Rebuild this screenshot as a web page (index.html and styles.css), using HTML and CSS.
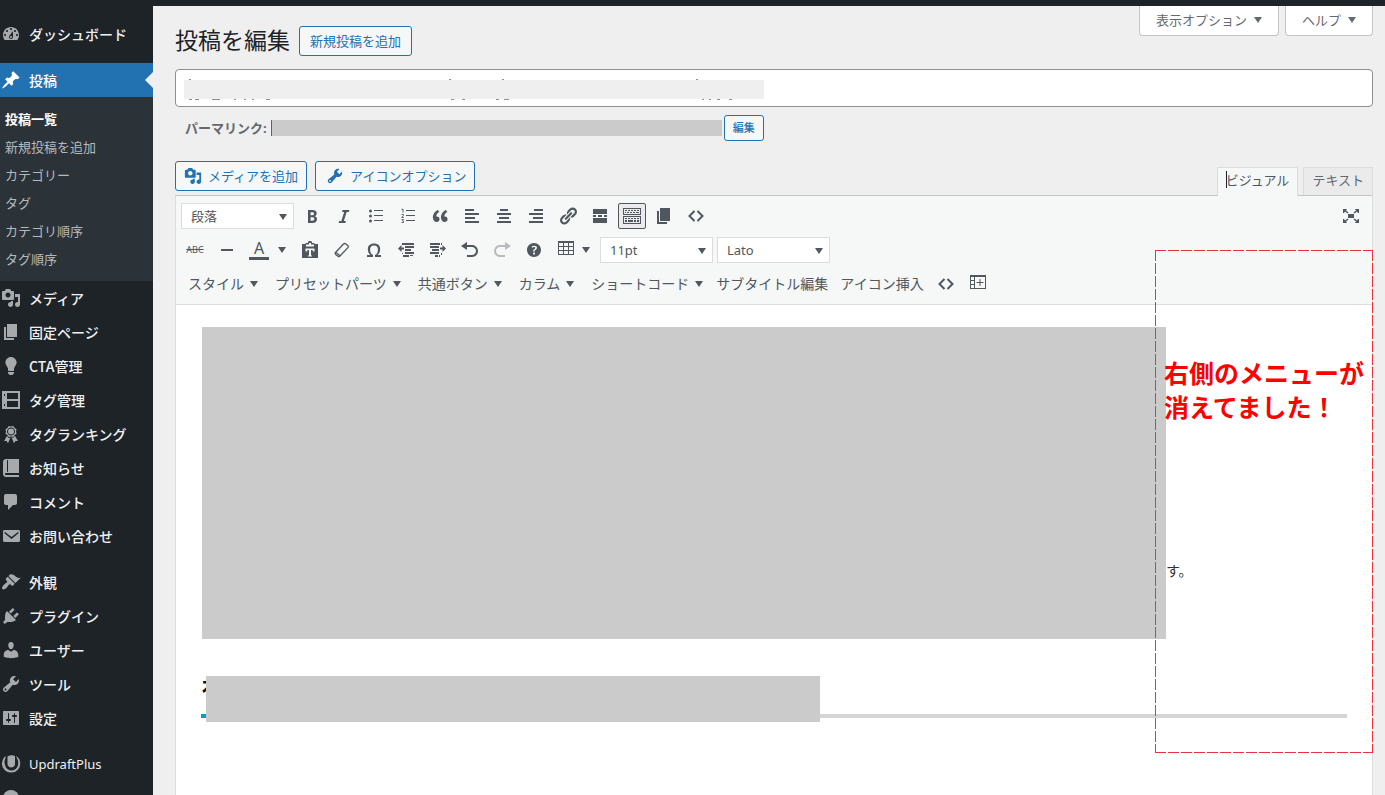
FILE: index.html
```html
<!DOCTYPE html>
<html lang="ja">
<head>
<meta charset="utf-8">
<meta name="viewport" content="width=device-width, initial-scale=1">
<title>投稿を編集</title>
<link rel="stylesheet" href="styles.css">
</head>
<body>
<svg class="sprite" aria-hidden="true">
  <symbol id="dashboard" viewBox="0 0 20 20"><path d="M3.76 16h12.48c1.1-1.37 1.76-3.11 1.76-5 0-4.42-3.58-8-8-8s-8 3.58-8 8c0 1.89.66 3.63 1.76 5zM10 4c.55 0 1 .45 1 1s-.45 1-1 1-1-.45-1-1 .45-1 1-1zM6 6c.55 0 1 .45 1 1s-.45 1-1 1-1-.45-1-1 .45-1 1-1zm8 0c.55 0 1 .45 1 1s-.45 1-1 1-1-.45-1-1 .45-1 1-1zm-5.37 5.55L12 7v6c0 1.1-.9 2-2 2s-2-.9-2-2c0-.57.24-1.08.63-1.45zM4 10c.55 0 1 .45 1 1s-.45 1-1 1-1-.45-1-1 .45-1 1-1zm12 0c.55 0 1 .45 1 1s-.45 1-1 1-1-.45-1-1 .45-1 1-1zm-5 3c0-.55-.45-1-1-1s-1 .45-1 1 .45 1 1 1 1-.45 1-1z"/></symbol>
  <symbol id="pin" viewBox="0 0 20 20"><path d="M10.44 3.02l1.82-1.82 6.36 6.35-1.83 1.82c-1.05-.68-2.48-.57-3.41.36l-.75.75c-.92.93-1.04 2.35-.35 3.41l-1.83 1.82-2.41-2.41-2.8 2.79c-.42.42-3.38 2.71-3.8 2.29s1.86-3.39 2.28-3.81l2.79-2.79L4.1 9.36l1.83-1.82c1.05.69 2.48.57 3.4-.36l.75-.75c.93-.92 1.05-2.35.36-3.41z"/></symbol>
  <symbol id="media" viewBox="0 0 20 20"><path d="M13 11V4c0-.55-.45-1-1-1h-1.67L9 1H5L3.67 3H2c-.55 0-1 .45-1 1v7c0 .55.45 1 1 1h10c.55 0 1-.45 1-1zM7 4.5c1.38 0 2.5 1.12 2.5 2.5S8.38 9.5 7 9.5 4.5 8.38 4.5 7 5.62 4.5 7 4.5zM14 6h5v10.5c0 1.38-1.12 2.5-2.5 2.5S14 17.88 14 16.5s1.12-2.5 2.5-2.5c.17 0 .34.02.5.05V9h-3V6zm-4 8.05V13h2v3.5c0 1.38-1.12 2.5-2.5 2.5S7 17.88 7 16.5 8.12 14 9.5 14c.17 0 .34.02.5.05z"/></symbol>
  <symbol id="page" viewBox="0 0 20 20"><path d="M6 15V2h10v13H6zm-1 1h8v2H3V5h2v11z"/></symbol>
  <symbol id="bulb" viewBox="0 0 20 20"><path d="M10 1c3.11 0 5.63 2.52 5.63 5.62 0 1.84-2.03 4.58-2.03 4.58-.33.44-.6 1.25-.6 1.8v1c0 .55-.45 1-1 1H8c-.55 0-1-.45-1-1v-1c0-.55-.27-1.36-.6-1.8 0 0-2.02-2.74-2.02-4.58C4.38 3.52 6.89 1 10 1zM7 16.87V16h6v.87c0 .62-.13 1.13-.75 1.13H12c0 .62-.4 1-1.02 1h-2c-.61 0-.98-.38-.98-1h-.25c-.62 0-.75-.51-.75-1.13z"/></symbol>
  <symbol id="rows" viewBox="0 0 20 20"><path fill-rule="evenodd" d="M1 1h18v18H1zM6 3v6h11V3zM6 11v6h11v-6zM3 4h1v2H3zM3 14h1v2H3z"/></symbol>
  <symbol id="award" viewBox="0 0 20 20"><path d="M4.46 5.16L5 7.46l-.54 2.29 2.01 1.24L7.7 13l2.3-.54 2.3.54 1.23-2.01 2.01-1.24L15 7.46l.54-2.3-2-1.24-1.24-2.01-2.3.55-2.29-.54-1.25 2zm5.55 6.34c-2.21 0-4-1.79-4-4 0-2.2 1.79-4 4-4 2.2 0 4 1.8 4 4 0 2.21-1.8 4-4 4zM13.830 11.600l-1.280 2.240-2.080-.47L13 19.200l1.400-2.200h2.500zm-7.700.07l1.250 2.250 2.130-.51L7 19.200 5.600 17H3.100z"/><circle cx="10" cy="7.500" r="3"/></symbol>
  <symbol id="book" viewBox="0 0 20 20"><path d="M5 17h13v2H5c-1.660 0-3-1.340-3-3V4c0-1.660 1.340-3 3-3h13v14H5c-.55 0-1 .45-1 1s.45 1 1 1zm2-3.500v-11c0-.28-.22-.5-.5-.5s-.5.22-.5.5v11c0 .28.22.5.5.5s.5-.22.5-.5z"/></symbol>
  <symbol id="comment" viewBox="0 0 20 20"><path d="M5 2h9c1.100 0 2 .9 2 2v7c0 1.100-.9 2-2 2h-2l-5 5v-5H5c-1.100 0-2-.9-2-2V4c0-1.100.9-2 2-2z"/></symbol>
  <symbol id="mail" viewBox="0 0 20 20"><path fill-rule="evenodd" d="M3 4h15l1 1v10l-1 1H3l-1-1V5zM4 6l-.8 1 7.300 6 7.300-6-.8-1-6.500 5z"/></symbol>
  <symbol id="brush" viewBox="0 0 20 20"><path d="M14.480 11.060L7.410 3.990l1.500-1.500c.5-.56 2.300-.47 3.510.32 1.210.8 1.430 1.280 2.910 2.100 1.180.64 2.450 1.260 4.450.85zm-.71.71L6.700 4.700 4.930 6.470c-.39.39-.39 1.020 0 1.410l1.060 1.060c.39.39.39 1.030 0 1.420-.6.6-1.430 1.110-2.210 1.690-.35.26-.7.53-1.010.84C1.430 14.230.4 16.080 1.400 17.070c.99 1 2.840-.03 4.180-1.360.31-.31.58-.66.85-1.020.57-.78 1.080-1.610 1.690-2.210.39-.39 1.020-.39 1.410 0l1.060 1.060c.39.39 1.020.39 1.410 0z"/></symbol>
  <symbol id="plug" viewBox="0 0 20 20"><path d="M13.110 4.360L9.870 7.600 8 5.730l3.240-3.240c.35-.34 1.050-.2 1.560.32.52.51.66 1.210.31 1.550zm-8 1.770l.91-1.120 9.010 9.010-1.190.84c-.71.71-2.630 1.160-3.820 1.160H6.140L4.900 17.260c-.59.59-1.540.59-2.120 0-.59-.58-.59-1.530 0-2.120l1.240-1.240v-3.880c0-1.130.4-3.190 1.090-3.890zm7.260 3.970l3.240-3.240c.34-.35 1.040-.21 1.550.31.52.51.66 1.210.31 1.550l-3.240 3.250z"/></symbol>
  <symbol id="user" viewBox="0 0 20 20"><path d="M10 9.250c-2.270 0-2.730-3.440-2.730-3.440C7 4.020 7.820 2 9.970 2c2.160 0 2.980 2.020 2.710 3.810 0 0-.41 3.440-2.680 3.440zm0 2.570L12.720 10c2.390 0 4.520 2.330 4.520 4.530v2.490s-3.650 1.130-7.240 1.130c-3.650 0-7.240-1.130-7.240-1.130v-2.490c0-2.250 1.940-4.480 4.470-4.480z"/></symbol>
  <symbol id="wrench" viewBox="0 0 20 20"><path d="M16.680 9.770c-1.340 1.340-3.300 1.670-4.950.99l-5.410 6.520c-.99.99-2.590.99-3.580 0s-.99-2.590 0-3.570l6.520-5.420c-.68-1.650-.35-3.610.99-4.950 1.280-1.280 3.120-1.620 4.720-1.060l-2.890 2.890 2.820 2.820 2.860-2.870c.53 1.580.18 3.390-1.080 4.650zM3.810 16.210c.4.39 1.040.39 1.430 0 .4-.4.4-1.040 0-1.430-.39-.4-1.030-.4-1.430 0-.39.39-.39 1.030 0 1.430z"/></symbol>
  <symbol id="sliders" viewBox="0 0 20 20"><path d="M18 16V4c0-.55-.45-1-1-1H3c-.55 0-1 .45-1 1v12c0 .55.45 1 1 1h14c.55 0 1-.45 1-1zM8 11h1c.55 0 1 .45 1 1s-.45 1-1 1H8v1.500c0 .28-.22.5-.5.5s-.5-.22-.5-.5V13H6c-.55 0-1-.45-1-1s.45-1 1-1h1V5.500c0-.28.22-.5.5-.5s.5.22.5.5V11zm5-2h-1c-.55 0-1-.45-1-1s.45-1 1-1h1V5.500c0-.28.22-.5.5-.5s.5.22.5.5V7h1c.55 0 1 .45 1 1s-.45 1-1 1h-1v5.500c0 .28-.22.5-.5.5s-.5-.22-.5-.5V9z"/></symbol>
  <symbol id="updraft" viewBox="0 0 20 20"><path d="M4 2.500A9.200 9.200 0 1 0 15.500 2v1.500C18 7 17.500 11 16 13.500 13.500 17.500 7.500 17.500 5 13.500 3 10 3 6 5 3z"/><path d="M6.500 2.500Q10 .5 14 2v8c0 4.500-7.500 4.500-7.500 0z"/></symbol>
  <symbol id="disc" viewBox="0 0 20 20"><circle cx="10" cy="10" r="8"/></symbol>
  <symbol id="bold" viewBox="0 0 20 20"><path d="M6 4v13h4.540c1.370 0 2.460-.33 3.260-1 .8-.66 1.200-1.580 1.200-2.770 0-.84-.17-1.510-.51-2.010s-.9-.85-1.670-1.030v-.09c.57-.1 1.020-.4 1.360-.9s.51-1.130.51-1.910c0-1.140-.39-1.980-1.170-2.500C12.750 4.260 11.500 4 9.780 4H6zm2.570 5.150V6.260h1.360c.73 0 1.270.11 1.610.32.34.22.51.58.51 1.070 0 .54-.16.92-.47 1.150s-.82.35-1.510.35h-1.500zm0 2.190h1.600c1.440 0 2.160.53 2.160 1.610 0 .6-.17 1.050-.51 1.340s-.86.43-1.570.43H8.570v-3.380z"/></symbol>
  <symbol id="italic" viewBox="0 0 20 20"><path d="M14.780 6h-2.130l-2.800 9h2.120l-.62 2H4.600l.62-2h2.140l2.800-9H8.030l.62-2h6.750z"/></symbol>
  <symbol id="ul" viewBox="0 0 20 20"><circle cx="4.500" cy="5" r="1.500"/><circle cx="4.500" cy="10" r="1.500"/><circle cx="4.500" cy="15" r="1.500"/><path d="M8 4h9v1H8zM8 9h9v1H8zM8 14h9v1H8z"/></symbol>
  <symbol id="ol" viewBox="0 0 20 20"><path d="M8 4h9v1H8zM8 9h9v1H8zM8 14h9v1H8z"/><path d="M3.500 3.500 5 3v3.500M3.500 8.500h2v1L3.700 11.500h2M3.500 13.500h2l-1 1.300 1 .4v1.300h-2" fill="none" stroke="currentColor" stroke-width=".9"/></symbol>
  <symbol id="quote" viewBox="0 0 20 20"><path d="M9.490 13.220c0-.74-.2-1.380-.61-1.900-.62-.78-1.830-.88-2.530-.72-.29-1.650 1.110-3.750 2.920-4.650L7.880 4c-2.730 1.300-5.420 4.280-4.960 8.050C3.210 14.430 4.590 16 6.540 16c.85 0 1.560-.25 2.120-.75s.83-1.180.83-2.030zm8.050 0c0-.74-.2-1.380-.61-1.900-.63-.78-1.830-.88-2.530-.72-.29-1.650 1.110-3.750 2.920-4.650L15.930 4c-2.730 1.300-5.410 4.280-4.950 8.050.29 2.380 1.660 3.950 3.610 3.950.85 0 1.560-.25 2.120-.75s.83-1.180.83-2.030z"/></symbol>
  <symbol id="al" viewBox="0 0 20 20"><path d="M3 3h9v2H3zM3 7h14v2H3zM3 11h10v2H3zM3 15h14v2H3z"/></symbol>
  <symbol id="ac" viewBox="0 0 20 20"><path d="M6 3h8v2H6zM3 7h14v2H3zM5 11h10v2H5zM3 15h14v2H3z"/></symbol>
  <symbol id="ar" viewBox="0 0 20 20"><path d="M8 3h9v2H8zM3 7h14v2H3zM7 11h10v2H7zM3 15h14v2H3z"/></symbol>
  <symbol id="link" viewBox="0 0 20 20"><path d="M17.740 2.760c1.680 1.690 1.680 4.410 0 6.100l-1.530 1.520c-1.120 1.120-2.700 1.470-4.140 1.090l2.620-2.610.76-.77.76-.76c.84-.84.84-2.200 0-3.040-.84-.85-2.200-.85-3.040 0l-.77.76-3.380 3.380c-.37-1.440-.02-3.020 1.100-4.140l1.520-1.530c1.690-1.680 4.420-1.680 6.100 0zM8.590 13.430l5.340-5.340c.42-.42.42-1.100 0-1.520-.44-.43-1.130-.39-1.530 0l-5.330 5.340c-.42.42-.42 1.100 0 1.520.44.43 1.130.39 1.520 0zm-.76 2.290l4.140-4.150c.38 1.440.03 3.020-1.090 4.140l-1.520 1.530c-1.690 1.680-4.410 1.680-6.100 0-1.680-1.680-1.680-4.420 0-6.100l1.530-1.520c1.120-1.120 2.700-1.470 4.140-1.100l-4.140 4.150c-.85.84-.85 2.200 0 3.050.84.84 2.200.84 3.040 0z"/></symbol>
  <symbol id="more" viewBox="0 0 20 20"><path d="M3 3h14v5H3zM3 12h14v5H3zM3 9h3v2H3zM8 9h4v2H8zM14 9h3v2h-3z"/></symbol>
  <symbol id="kitchen" viewBox="0 0 20 20"><path fill-rule="evenodd" d="M1 2h18v7H1zM2 3v5h16V3zM1 10h18v8H1zM2 11v6h16v-6z"/><path d="M3 4h2v1H3zM6 4h2v1H6zM9 4h2v1H9zM12 4h2v1h-2zM15 4h2v1h-2zM3 6h1v1H3zM5 6h2v1H5zM8 6h2v1H8zM11 6h2v1h-2zM14 6h3v1h-3zM3 12h2v1H3zM6 12h2v1H6zM9 12h2v1H9zM12 12h2v1h-2zM15 12h2v1h-2zM3 14h2v2H3zM6 14h5v2H6zM12 14h2v2h-2zM15 14h2v2h-2z"/></symbol>
  <symbol id="code" viewBox="0 0 20 20"><path d="M8.500 5 3.500 10l5 5M11.500 5l5 5-5 5" fill="none" stroke="currentColor" stroke-width="2"/></symbol>
  <symbol id="expand" viewBox="0 0 20 20"><path d="M7 8h6v4H7zM2 3h4L5 4.500l2.500 2-1 1-2.500-2L3 7H2zM18 3h-4l1 1.500-2.500 2 1 1 2.500-2L17 7h1zM2 17h4l-1-1.500 2.500-2-1-1-2.500 2L3 13H2zM18 17h-4l1-1.500-2.500-2 1-1 2.500 2L17 13h1z"/></symbol>
  <symbol id="minus" viewBox="0 0 20 20"><path d="M4 9h12v2H4z"/></symbol>
  <symbol id="paste" viewBox="0 0 20 20"><path fill-rule="evenodd" d="M2 4h3l1-1h2V2l1-1h2l1 1v1h2l1 1h3v14H2zM6 4.500v2h8v-2h-3V3H9v1.500zM5.500 8.500v3H7l.5-1.500H9v5.500H8v1h4v-1h-1V10h1.500l.5 1.500h1.500v-3z"/></symbol>
  <symbol id="eraser" viewBox="0 0 20 20"><path d="M3.500 12.500 11.500 4q1-.9 2.200-.2l2 1.800q1 .9.200 2L8 16q-1 1-2 .2l-2.300-1.800q-.9-1-.2-1.900zM3.800 12.300l4.200 3.400" fill="none" stroke="currentColor" stroke-width="1.300"/></symbol>
  <symbol id="omega" viewBox="0 0 20 20"><path d="M10 5.400c1.270 0 2.240.36 2.910 1.080.66.71 1 1.760 1 3.130 0 1.280-.23 2.370-.69 3.270-.47.89-1.270 1.520-2.220 2.120v2h6v-2h-3.690c.92-.64 1.620-1.340 2.120-2.340.49-1.010.74-2.130.74-3.350 0-1.780-.55-3.190-1.650-4.220S11.920 3.540 10 3.540s-3.430.53-4.520 1.570c-1.100 1.040-1.650 2.440-1.650 4.200 0 1.210.24 2.310.73 3.330.48 1.010 1.190 1.710 2.100 2.360H3v2h6v-2c-.98-.64-1.800-1.280-2.240-2.170-.45-.89-.67-1.960-.67-3.220 0-1.370.33-2.410 1-3.130C7.750 5.760 8.720 5.400 10 5.400z"/></symbol>
  <symbol id="outdent" viewBox="0 0 20 20"><path d="M7 3h11v2H7zM9 6h9v2H9zM9 9h6v2H9zM9 12h9v2H9zM7 15h6v2H7zM5.500 5v2.500H8v2H5.500V12L2 8.500zM6 3h1v2H6zM6 13h1v1H6zM14 15h3v1h-3z"/></symbol>
  <symbol id="indent" viewBox="0 0 20 20"><path d="M2 3h10v2H2zM2 6h9v2H2zM4 9h7v2H4zM2 12h9v2H2zM7 15h3v2H7zM14.500 5v2.500H12v2h2.500V12L18 8.500zM13 3h1v2h-1zM13 13h1v2h-1zM11 15h1v2h-1z"/></symbol>
  <symbol id="undo" viewBox="0 0 20 20"><path d="M12 5H7V2L1 6l6 4V7h5c2.200 0 4 1.800 4 4s-1.800 4-4 4H7v2h5c3.300 0 6-2.700 6-6s-2.700-6-6-6z"/></symbol>
  <symbol id="redo" viewBox="0 0 20 20"><path d="M8 5h5V2l6 4-6 4V7H8c-2.200 0-4 1.800-4 4s1.800 4 4 4h5v2H8c-3.300 0-6-2.700-6-6s2.700-6 6-6z"/></symbol>
  <symbol id="help" viewBox="0 0 20 20"><path d="M17 10c0-3.870-3.140-7-7-7-3.870 0-7 3.130-7 7s3.130 7 7 7c3.860 0 7-3.130 7-7zm-6.300 1.480H9.140v-.43c0-.38.08-.7.24-.98s.46-.57.88-.89c.41-.29.68-.53.81-.71.14-.18.2-.39.2-.62 0-.25-.09-.44-.28-.58-.19-.13-.45-.19-.79-.19-.58 0-1.250.19-2 .57l-.64-1.280c.87-.49 1.800-.74 2.770-.74.81 0 1.450.2 1.920.58.48.39.71.91.71 1.550 0 .43-.09.8-.29 1.110-.19.32-.57.67-1.110 1.060-.38.28-.61.49-.71.63-.1.15-.15.34-.15.57v.35zm-1.470 2.740c-.18-.17-.27-.42-.27-.73 0-.33.08-.58.26-.75s.43-.25.77-.25c.32 0 .57.09.75.26s.27.42.27.74c0 .3-.09.55-.27.72-.18.18-.43.27-.75.27-.33 0-.58-.09-.76-.26z"/></symbol>
  <symbol id="table" viewBox="0 0 20 20"><path fill-rule="evenodd" d="M2 1h16v14H2zM3 3v3h4V3zM8 3v3h4V3zM13 3v3h4V3zM3 7v3h4V7zM8 7v3h4V7zM13 7v3h4V7zM3 11v3h4v-3zM8 11v3h4v-3zM13 11v3h4v-3z"/></symbol>
  <symbol id="tableadd" viewBox="0 0 20 20"><path fill-rule="evenodd" d="M2 1h16v14H2zM3 3v3h3V3zM3 7v3h3V7zM3 11v3h3v-3zM7 3v11h10V3z"/><path d="M11.500 5h1v3h3v1h-3v3h-1V9h-3V8h3z"/></symbol>
  <symbol id="down" viewBox="0 0 8 6"><path d="M0 0h8L4 6z"/></symbol>
</svg>

<div class="adminbar"></div>
<div class="shell">
  <nav class="sidebar" aria-label="メインメニュー">
    <ul class="menu">
      <li><a class="item" href="#"><svg><use href="#dashboard"/></svg>ダッシュボード</a></li>
    </ul>
    <ul class="menu">
      <li>
        <a class="item current" href="#"><svg><use href="#pin"/></svg>投稿</a>
        <ul class="submenu">
          <li><a class="selected" href="#">投稿一覧</a></li>
          <li><a href="#">新規投稿を追加</a></li>
          <li><a href="#">カテゴリー</a></li>
          <li><a href="#">タグ</a></li>
          <li><a href="#">カテゴリ順序</a></li>
          <li><a href="#">タグ順序</a></li>
        </ul>
      </li>
      <li><a class="item" href="#"><svg><use href="#media"/></svg>メディア</a></li>
      <li><a class="item" href="#"><svg><use href="#page"/></svg>固定ページ</a></li>
      <li><a class="item" href="#"><svg><use href="#bulb"/></svg>CTA管理</a></li>
      <li><a class="item" href="#"><svg><use href="#rows"/></svg>タグ管理</a></li>
      <li><a class="item" href="#"><svg><use href="#award"/></svg>タグランキング</a></li>
      <li><a class="item" href="#"><svg><use href="#book"/></svg>お知らせ</a></li>
      <li><a class="item" href="#"><svg><use href="#comment"/></svg>コメント</a></li>
      <li><a class="item" href="#"><svg><use href="#mail"/></svg>お問い合わせ</a></li>
    </ul>
    <ul class="menu">
      <li><a class="item" href="#"><svg><use href="#brush"/></svg>外観</a></li>
      <li><a class="item" href="#"><svg><use href="#plug"/></svg>プラグイン</a></li>
      <li><a class="item" href="#"><svg><use href="#user"/></svg>ユーザー</a></li>
      <li><a class="item" href="#"><svg><use href="#wrench"/></svg>ツール</a></li>
      <li><a class="item" href="#"><svg><use href="#sliders"/></svg>設定</a></li>
    </ul>
    <ul class="menu">
      <li><a class="item latin" href="#"><svg><use href="#updraft"/></svg>UpdraftPlus</a></li>
      <li><a class="item" href="#"><svg><use href="#disc"/></svg></a></li>
    </ul>
  </nav>

  <main class="main">
    <header class="head">
      <h1>投稿を編集</h1>
      <a class="btn" href="#">新規投稿を追加</a>
      <div class="meta">
        <button type="button">表示オプション <svg class="arrow"><use href="#down"/></svg></button>
        <button type="button">ヘルプ <svg class="arrow"><use href="#down"/></svg></button>
      </div>
    </header>

    <div class="title">
      <input type="text" aria-label="タイトル">
      <span class="mask title-mask"></span>
      <svg class="specks" aria-hidden="true"><path d="M5 0h2v1H5zM265 0h2v1h-2zM318 0h2v1h-2zM512 0h2v1h-2zM5 20h3v1H5zM11 20h4v1h-4zM28 20h8v1h-8zM50 20h2v1h-2zM60 20h2v1h-2zM68 20h2v1h-2zM82 20h4v1h-4zM267 20h3v1h-3zM278 20h3v1h-3zM312 20h3v1h-3zM320 20h5v1h-5zM518 20h2v1h-2zM525 20h2v1h-2zM533 20h3v1h-3zM545 20h3v1h-3z"/></svg>
    </div>

    <div class="permalink">
      <strong>パーマリンク:</strong>
      <a class="mask url-mask" href="#" aria-label="パーマリンク"></a>
      <button class="btn small" type="button">編集</button>
    </div>

    <div class="tools">
      <button class="btn" type="button"><svg><use href="#media"/></svg>メディアを追加</button>
      <button class="btn" type="button"><svg class="wide"><use href="#wrench"/></svg>アイコンオプション</button>
      <div class="tabs">
        <button class="tab active" type="button">ビジュアル</button>
        <button class="tab" type="button">テキスト</button>
      </div>
    </div>

    <section class="editor">
      <div class="toolbar">
        <div class="row">
          <span class="pick"><select aria-label="段落"><option>段落</option></select><svg class="arrow"><use href="#down"/></svg></span>
          <button type="button" aria-label="太字"><svg><use href="#bold"/></svg></button>
          <button type="button" aria-label="イタリック"><svg><use href="#italic"/></svg></button>
          <button type="button" aria-label="番号なしリスト"><svg><use href="#ul"/></svg></button>
          <button type="button" aria-label="番号付きリスト"><svg><use href="#ol"/></svg></button>
          <button type="button" aria-label="引用"><svg><use href="#quote"/></svg></button>
          <button type="button" aria-label="左寄せ"><svg><use href="#al"/></svg></button>
          <button type="button" aria-label="中央揃え"><svg><use href="#ac"/></svg></button>
          <button type="button" aria-label="右寄せ"><svg><use href="#ar"/></svg></button>
          <button type="button" aria-label="リンク"><svg><use href="#link"/></svg></button>
          <button type="button" aria-label="続きを読む"><svg><use href="#more"/></svg></button>
          <button class="pressed" type="button" aria-label="ツールバー切り替え"><svg><use href="#kitchen"/></svg></button>
          <button type="button" aria-label="改ページ"><svg><use href="#page"/></svg></button>
          <button type="button" aria-label="コード"><svg><use href="#code"/></svg></button>
          <button class="end" type="button" aria-label="集中執筆モード"><svg><use href="#expand"/></svg></button>
        </div>
        <div class="row">
          <button class="strike" type="button">ABC</button>
          <button type="button" aria-label="横ライン"><svg><use href="#minus"/></svg></button>
          <button class="split" type="button" aria-label="テキスト色"><span class="color">A</span><svg class="arrow"><use href="#down"/></svg></button>
          <button type="button" aria-label="テキストとしてペースト"><svg><use href="#paste"/></svg></button>
          <button type="button" aria-label="書式設定をクリア"><svg><use href="#eraser"/></svg></button>
          <button type="button" aria-label="特殊文字"><svg><use href="#omega"/></svg></button>
          <button type="button" aria-label="インデントを減らす"><svg><use href="#outdent"/></svg></button>
          <button type="button" aria-label="インデントを増やす"><svg><use href="#indent"/></svg></button>
          <button type="button" aria-label="取り消し"><svg><use href="#undo"/></svg></button>
          <button type="button" aria-label="やり直し" disabled><svg><use href="#redo"/></svg></button>
          <button type="button" aria-label="ヘルプ"><svg><use href="#help"/></svg></button>
          <button class="split grid" type="button" aria-label="テーブル"><svg><use href="#table"/></svg><svg class="arrow"><use href="#down"/></svg></button>
          <span class="pick"><select aria-label="フォントサイズ"><option>11pt</option></select><svg class="arrow"><use href="#down"/></svg></span>
          <span class="pick"><select aria-label="フォント"><option>Lato</option></select><svg class="arrow"><use href="#down"/></svg></span>
        </div>
        <div class="row labels">
          <button class="label" type="button">スタイル<svg class="arrow"><use href="#down"/></svg></button>
          <button class="label" type="button">プリセットパーツ<svg class="arrow"><use href="#down"/></svg></button>
          <button class="label" type="button">共通ボタン<svg class="arrow"><use href="#down"/></svg></button>
          <button class="label" type="button">カラム<svg class="arrow"><use href="#down"/></svg></button>
          <button class="label last" type="button">ショートコード<svg class="arrow"><use href="#down"/></svg></button>
          <button class="label" type="button">サブタイトル編集</button>
          <button class="label" type="button">アイコン挿入</button>
          <button type="button" aria-label="コード"><svg><use href="#code"/></svg></button>
          <button type="button" aria-label="表を挿入"><svg><use href="#tableadd"/></svg></button>
        </div>
      </div>
      <div class="content">
        <div class="para"><span class="mask para-mask"></span><p>す。</p></div>
        <h2>社<span class="mask head-mask"></span></h2>
      </div>
    </section>

    <aside class="note">
      <p>右側のメニューが<br>消えてました！</p>
    </aside>
  </main>
</div>
</body>
</html>
```
FILE: styles.css
```css
* { box-sizing: border-box; }

body {
  display: flex;
  flex-direction: column;
  height: 100vh;
  margin: 0;
  overflow: hidden;
  background: #efefef;
  color: #3c434a;
  font: 13px/20px "Noto Sans", "Noto Sans CJK JP", sans-serif;
}

button, input, select { font: inherit; color: inherit; }
button { cursor: pointer; white-space: nowrap; }
ul { margin: 0; padding: 0; list-style: none; }
a { text-decoration: none; }
svg { display: block; flex: none; width: 20px; height: 20px; fill: currentColor; overflow: visible; }
.sprite { position: absolute; width: 0; height: 0; }
.arrow { width: 8px; height: 6px; }
.mask { display: block; background: #cbcbcb; }

.adminbar { flex: none; height: 6px; background: #1d2327; }
.shell { display: flex; flex: 1; min-height: 0; }

/* Sidebar */
.sidebar {
  display: flex;
  flex-direction: column;
  flex: none;
  gap: 12px;
  width: 153px;
  padding-top: 11px;
  overflow: hidden;
  background: #1d2327;
}
.item {
  position: relative;
  display: flex;
  align-items: center;
  gap: 8px;
  height: 34px;
  padding-left: 1px;
  color: #f0f0f1;
  font-family: "Noto Sans CJK JP", "Noto Sans", sans-serif;
  font-size: 14px;
  font-weight: 500;
}
.latin { font-family: "Noto Sans", sans-serif; font-size: 13px; font-weight: 400; }
.item svg { color: #a7aaad; }
.current { background: #2271b1; color: #fff; }
.current svg { color: #fff; }
.current::after {
  content: "";
  position: absolute;
  top: 9px;
  right: 0;
  border: 8px solid transparent;
  border-left-width: 0;
  border-right-color: #efefef;
}
.submenu { padding: 8px 0; background: #2c3338; }
.submenu a {
  display: block;
  padding: 4px 5px;
  color: #b4b9be;
}
.submenu .selected { color: #fff; font-weight: 700; }

/* Page head */
.main {
  position: relative;
  display: flex;
  flex: 1;
  flex-direction: column;
  min-width: 0;
  padding: 0 12px 0 22px;
}
.head { display: flex; flex: none; align-items: flex-start; height: 63px; }
h1 {
  margin: 0 9px 0 0;
  padding-top: 19px;
  color: #1d2327;
  font-size: 23px;
  font-weight: 400;
  line-height: 30px;
}
.btn {
  display: flex;
  align-items: center;
  height: 30px;
  padding: 0 10px;
  border: 1px solid #2271b1;
  border-radius: 3px;
  background: #f6f7f7;
  color: #2271b1;
}
.head .btn { margin-top: 20px; }
.meta { display: flex; gap: 6px; margin-left: auto; }
.meta button {
  display: flex;
  align-items: center;
  gap: 7px;
  height: 30px;
  padding: 0 16px 2px;
  border: 1px solid #c3c4c7;
  border-top: 0;
  border-radius: 0 0 4px 4px;
  background: #fff;
  color: #646970;
}

.title { position: relative; }
.title input {
  display: block;
  width: 100%;
  height: 38px;
  padding: 3px 8px;
  border: 1px solid #8c8f94;
  border-radius: 4px;
  background: #fff;
  font-size: 22px;
}
.title-mask {
  position: absolute;
  top: 11px;
  left: 9px;
  width: 580px;
  max-width: 90%;
  height: 19px;
  background: #efefef;
}
.specks {
  position: absolute;
  top: 10px;
  left: 9px;
  width: 580px;
  height: 21px;
  color: #8c8f94;
}

.permalink {
  display: flex;
  align-items: center;
  height: 42px;
  padding: 0 0 1px 10px;
  color: #646970;
}
.url-mask {
  width: 451px;
  height: 16px;
  margin: 0 2px 0 4px;
  border-left: 1px solid #2271b1;
}
.small { height: 26px; padding: 0 8px; font-size: 11px; font-weight: 500; }

.tools { display: flex; align-items: flex-start; gap: 8px; height: 46px; padding-top: 12px; }
.tools .btn { gap: 6px; padding: 0 8px; }
.tools svg { width: 18px; height: 18px; }
.tools .wide { margin-left: 2px; }
.tabs { display: flex; align-self: flex-end; gap: 5px; margin-left: auto; }
.tab {
  height: 28px;
  padding: 0 8px 3px;
  border: 1px solid #dcdcde;
  border-bottom: 0;
  background: #ebebeb;
  color: #646970;
  font-size: 13px;
}
.active {
  position: relative;
  height: 29px;
  margin-bottom: -1px;
  padding-bottom: 4px;
  background: #f6f7f7;
  color: #50575e;
}
.active::before {
  content: "";
  position: absolute;
  top: 3px;
  left: 8px;
  width: 1px;
  height: 17px;
  background: #1d2327;
}

/* Editor */
.editor {
  display: flex;
  flex: 1;
  flex-direction: column;
  border: 1px solid #dcdcde;
  border-top-color: #c3c4c7;
  border-bottom: 0;
  background: #fff;
}
.toolbar {
  display: flex;
  flex-direction: column;
  gap: 8px;
  padding: 7px 7px 7px 5px;
  border-bottom: 1px solid #dcdcde;
  background: #f6f7f7;
  color: #50575e;
}
.row { display: flex; align-items: center; gap: 4px; height: 26px; }
.row button {
  display: flex;
  align-items: center;
  justify-content: center;
  width: 28px;
  height: 26px;
  padding: 0;
  border: 0;
  background: none;
}
.row button:disabled { color: #b9bcbf; }
.row .pressed { border: 1px solid #50575e; border-radius: 2px; background: #ebebeb; }
.row .end { margin-left: auto; }
.row .split { justify-content: flex-start; gap: 9px; width: 47px; padding-left: 4px; }
.row .grid { gap: 6px; width: 44px; }
.row .strike { font-size: 9px; text-decoration: line-through; }
.color {
  width: 20px;
  border-bottom: 3px solid #50575e;
  font-size: 16px;
  line-height: 17px;
}
.labels { padding-left: 3px; }
.row .label { width: auto; padding: 0 4px; font-size: 14px; }
.label .arrow { margin: 0 5px 0 6px; }
.last .arrow { margin-right: 1px; }
.pick { position: relative; width: 113px; height: 26px; }
.pick select {
  width: 100%;
  height: 100%;
  padding: 0 9px;
  border: 1px solid #dcdcde;
  border-radius: 0;
  background: #fff;
  appearance: none;
}
.pick .arrow { position: absolute; top: 11px; right: 7px; pointer-events: none; }

.content { flex: 1; padding: 22px 25px 0 26px; color: #333; }
.para { display: flex; }
.para-mask { flex: 1; height: 312px; }
.para p { width: 181px; margin: 234px 0 0; font-size: 14px; }
h2 {
  position: relative;
  margin: 34px 0 0;
  height: 45px;
  border-bottom: 4px solid #d5d5d5;
  color: #111;
  font-size: 22px;
  font-weight: 700;
  line-height: 28px;
}
h2::after {
  content: "";
  position: absolute;
  bottom: -4px;
  left: -1px;
  width: 60px;
  height: 4px;
  background: #0a9ebd;
}
.head-mask {
  position: absolute;
  z-index: 1;
  top: 3px;
  left: 4px;
  width: 614px;
  height: 46px;
}

/* Annotation drawn over the editor */
.note {
  --across: repeating-linear-gradient(90deg, #f0303a 0 11px, transparent 11px 13px);
  --down: repeating-linear-gradient(180deg, #f0303a 0 11px, transparent 11px 13px);
  position: absolute;
  top: 244px;
  right: 12px;
  width: 218px;
  height: 503px;
  padding: 106px 0 0 9px;
  background:
    var(--across) top / 100% 1px no-repeat,
    var(--across) bottom / 100% 1px no-repeat,
    var(--down) left / 1px 100% no-repeat,
    var(--down) right / 1px 100% no-repeat;
}
.note p {
  margin: 0;
  color: #f00;
  font-size: 25px;
  font-weight: 700;
  line-height: 34px;
  white-space: nowrap;
}
```
